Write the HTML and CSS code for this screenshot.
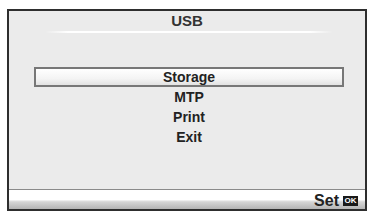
FILE: index.html
```html
<!DOCTYPE html>
<html lang="en">
<head>
    <meta charset="UTF-8">
    <meta name="viewport" content="width=device-width, initial-scale=1.0">
    <title>USB</title>
    <link rel="stylesheet" href="styles.css">
</head>
<body>
    <div class="screen">
        <h1 class="title">USB</h1>
        <div class="title-rule"></div>
        <ul class="menu">
            <li class="selected">Storage</li>
            <li>MTP</li>
            <li>Print</li>
            <li>Exit</li>
        </ul>
        <div class="footer">
            <span class="set">Set</span>
            <span class="ok">OK</span>
        </div>
    </div>
</body>
</html>
```

FILE: styles.css
```css
body {
    margin: 0;
    background-color: #fff;
    font-family: 'Liberation Sans', Arial, sans-serif;
    color: #222;
}
.screen {
    box-sizing: border-box;
    width: 360px;
    height: 202px;
    margin: 9px 0 0 7px;
    border: 2px solid #2e2e2e;
    background-color: #ebebeb;
    display: flex;
    flex-direction: column;
}
.title {
    margin: 0;
    padding-top: 1px;
    font-size: 15px;
    line-height: 18px;
    font-weight: bold;
    text-align: center;
    color: #333;
}
.title-rule {
    width: 288px;
    height: 2px;
    margin: 1px 0 0 36px;
    background: linear-gradient(to right, rgba(255,255,255,0), #fff 8%, #fff 92%, rgba(255,255,255,0));
}
.menu {
    list-style: none;
    margin: 34px 0 0 25px;
    padding: 0;
    width: 310px;
}
.menu li {
    height: 20px;
    font-size: 14px;
    line-height: 20px;
    font-weight: bold;
    text-align: center;
}
.menu li.selected {
    box-sizing: border-box;
    border: 2px solid #777;
    line-height: 16px;
    background: linear-gradient(#fff, #f4f4f4 60%, #e2e2e2);
}
.footer {
    margin-top: auto;
    height: 19px;
    border-top: 1px solid #8a8a8a;
    background: linear-gradient(#fff 0, #fff 50%, #d6d6d6 62%, #b4b4b4 100%);
    display: flex;
    justify-content: flex-end;
    align-items: center;
    gap: 4px;
    padding-right: 7px;
}
.set {
    font-size: 16px;
    line-height: 18px;
    font-weight: bold;
    color: #222;
    padding-top: 2px;
}
.ok {
    display: inline-block;
    width: 15px;
    height: 10px;
    margin-top: 3px;
    background-color: #1a1a1a;
    color: #fff;
    font-size: 8px;
    line-height: 10px;
    font-weight: bold;
    text-align: center;
}
```
